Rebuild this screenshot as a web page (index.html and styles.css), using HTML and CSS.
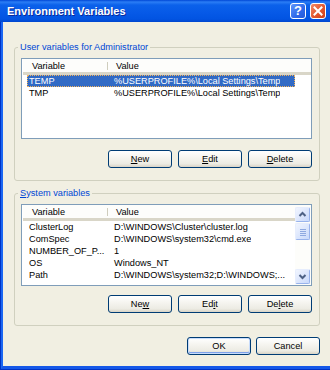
FILE: index.html
```html
<!DOCTYPE html>
<html>
<head>
<meta charset="utf-8">
<title>Environment Variables</title>
<link rel="stylesheet" href="styles.css">
</head>
<body>
<div class="window">
  <div class="titlebar">
    <span class="title">Environment Variables</span>
    <div class="tb-buttons">
      <span class="tb-btn help">?</span>
      <span class="tb-btn close"><svg width="10" height="10" viewBox="0 0 10 10"><path d="M1.5 1.5 L8.5 8.5 M8.5 1.5 L1.5 8.5" stroke="#fff" stroke-width="2" stroke-linecap="square"/></svg></span>
    </div>
  </div>
  <div class="frame">
    <div class="client">
      <fieldset class="group">
        <legend>User variables for Administrator</legend>
        <div class="list list-user">
          <div class="main">
            <div class="lv-header"><span class="h1">Variable</span><span class="hsep"></span><span class="h2">Value</span></div>
            <div class="row selected"><span class="c1">TEMP</span><span class="c2">%USERPROFILE%\Local Settings\Temp</span></div>
            <div class="row"><span class="c1">TMP</span><span class="c2">%USERPROFILE%\Local Settings\Temp</span></div>
          </div>
        </div>
        <div class="btn-row">
          <button class="btn"><u>N</u>ew</button>
          <button class="btn"><u>E</u>dit</button>
          <button class="btn"><u>D</u>elete</button>
        </div>
      </fieldset>
      <fieldset class="group group-sys">
        <legend><u>S</u>ystem variables</legend>
        <div class="list list-sys">
          <div class="main">
            <div class="lv-header"><span class="h1">Variable</span><span class="hsep"></span><span class="h2">Value</span></div>
            <div class="row"><span class="c1">ClusterLog</span><span class="c2">D:\WINDOWS\Cluster\cluster.log</span></div>
            <div class="row"><span class="c1">ComSpec</span><span class="c2">D:\WINDOWS\system32\cmd.exe</span></div>
            <div class="row"><span class="c1">NUMBER_OF_P...</span><span class="c2">1</span></div>
            <div class="row"><span class="c1">OS</span><span class="c2">Windows_NT</span></div>
            <div class="row"><span class="c1">Path</span><span class="c2">D:\WINDOWS\system32;D:\WINDOWS;...</span></div>
          </div>
          <div class="scrollbar">
            <span class="sb-btn"><svg width="13" height="13" viewBox="0 0 13 13"><path d="M3.5 8 L6.5 5 L9.5 8" fill="none" stroke="#4d6185" stroke-width="2"/></svg></span>
            <span class="sb-thumb"><svg width="8" height="8" viewBox="0 0 8 8"><path d="M1 1.5 H7 M1 3.5 H7 M1 5.5 H7 M1 7.5 H7" stroke="#8fa9e0" stroke-width="1"/></svg></span>
            <span class="sb-track"></span>
            <span class="sb-btn"><svg width="13" height="13" viewBox="0 0 13 13"><path d="M3.5 5 L6.5 8 L9.5 5" fill="none" stroke="#4d6185" stroke-width="2"/></svg></span>
          </div>
        </div>
        <div class="btn-row">
          <button class="btn">Ne<u>w</u></button>
          <button class="btn">Ed<u>i</u>t</button>
          <button class="btn">De<u>l</u>ete</button>
        </div>
      </fieldset>
      <div class="dialog-buttons">
        <button class="btn default">OK</button>
        <button class="btn">Cancel</button>
      </div>
    </div>
  </div>
</div>
</body>
</html>
```

FILE: styles.css
```css
* { box-sizing: border-box; }
html, body { margin: 0; padding: 0; }
body {
  width: 330px;
  height: 370px;
  overflow: hidden;
  font-family: "Liberation Sans", Arial, sans-serif;
  font-size: 9.2px;
  color: #000;
}
.window {
  width: 330px;
  height: 370px;
  display: flex;
  flex-direction: column;
}
.titlebar {
  height: 22px;
  flex: none;
  display: flex;
  justify-content: space-between;
  align-items: flex-start;
  background: linear-gradient(to bottom, #0047d6 0px, #2b7df5 2px, #0b61ea 5px, #0659e7 13px, #0254e2 19px, #0046cf 22px);
  padding: 0 4px 0 7px;
}
.title {
  color: #fff;
  font-weight: bold;
  font-size: 11px;
  line-height: 13px;
  padding-top: 5px;
  text-shadow: 1px 1px 0 #0b2a9a;
}
.tb-buttons {
  display: flex;
  gap: 4px;
  padding-top: 3px;
}
.tb-btn {
  width: 16px;
  height: 16px;
  border: 1px solid #fff;
  border-radius: 3px;
  display: flex;
  align-items: center;
  justify-content: center;
}
.help {
  background: linear-gradient(135deg, #5f96fb, #2f69ea 60%, #2459d8);
  color: #fff;
  font-weight: bold;
  font-size: 13px;
  line-height: 14px;
}
.close {
  background: linear-gradient(135deg, #f08a68, #e2572f 55%, #cc3f1b);
}
.frame {
  flex: 1;
  display: flex;
  background: #0033c4;
  padding: 0 0 1px 1px;
}
.client {
  flex: 1;
  background: #f1efe2;
  border-left: 2px solid #1a66f2;
  border-bottom: 3px solid #1558e8;
  padding: 19px 10px 0 11px;
  display: flex;
  flex-direction: column;
}
.group {
  margin: 0;
  min-inline-size: 0;
  width: 306px;
  border: 1px solid #d0d0bf;
  border-radius: 3px;
  padding: 5px 7px 12px 6px;
}
.group-sys { margin-top: 6px; }
legend {
  color: #0046d5;
  line-height: 12px;
  padding: 0 2px;
  margin-left: -3px;
}
u { text-decoration: underline; text-underline-offset: 1px; }
.list {
  width: 291px;
  border: 1px solid #7f9db9;
  background: #fff;
  display: flex;
  overflow: hidden;
}
.list-user { height: 81px; }
.list-sys { height: 82px; }
.main {
  flex: 1;
  min-width: 0;
}
.lv-header {
  height: 16px;
  margin-left: 1px;
  display: flex;
  align-items: center;
  background: #fdfdfb;
  border-bottom: 3px solid #d9d6c8;
}
.h1 { width: 84px; padding-left: 9px; }
.hsep {
  width: 1px;
  height: 8px;
  background: #cfcdbd;
}
.h2 { padding-left: 8px; }
.row {
  height: 12px;
  line-height: 12px;
  margin-left: 5px;
  width: 268px;
  display: flex;
  white-space: nowrap;
  overflow: hidden;
}
.c1 { width: 85px; padding-left: 2px; flex: none; overflow: hidden; }
.c2 { padding-left: 2px; overflow: hidden; }
.row.selected {
  background: #316ac5;
  color: #fff;
  outline: 1px dotted #f2b35c;
  outline-offset: -1px;
}
.scrollbar {
  width: 16px;
  flex: none;
  display: flex;
  flex-direction: column;
  padding: 2px 1px 1px 0;
  background: #fdfdfa;
}
.sb-btn, .sb-thumb {
  height: 15px;
  flex: none;
  border: 1px solid;
  border-color: #e6edfd #98b3ec #98b3ec #e6edfd;
  border-radius: 2px;
  background: linear-gradient(135deg, #f1f5fe, #c9d9fb);
  display: flex;
  align-items: center;
  justify-content: center;
}
.sb-thumb { height: 17px; margin-top: 1px; }
.sb-track { flex: 1; }
.btn-row {
  display: flex;
  justify-content: flex-end;
  gap: 6px;
  margin-top: 11px;
}
.list-sys + .btn-row { margin-top: 9px; }
.btn {
  width: 64px;
  height: 18px;
  padding: 0;
  font-family: inherit;
  font-size: 9.2px;
  color: #000;
  border: 1px solid #003c74;
  border-radius: 3px;
  background: linear-gradient(to bottom, #ffffff 0%, #f6f5f0 40%, #ecebe3 80%, #d8d3c6 100%);
  display: flex;
  align-items: center;
  justify-content: center;
}
.btn.default {
  box-shadow: inset 0 0 0 1px #c8dcfb, inset 0 -1px 0 1px #7ea1ea;
}
.dialog-buttons {
  display: flex;
  justify-content: flex-end;
  gap: 5px;
  margin-top: 11px;
}
```
